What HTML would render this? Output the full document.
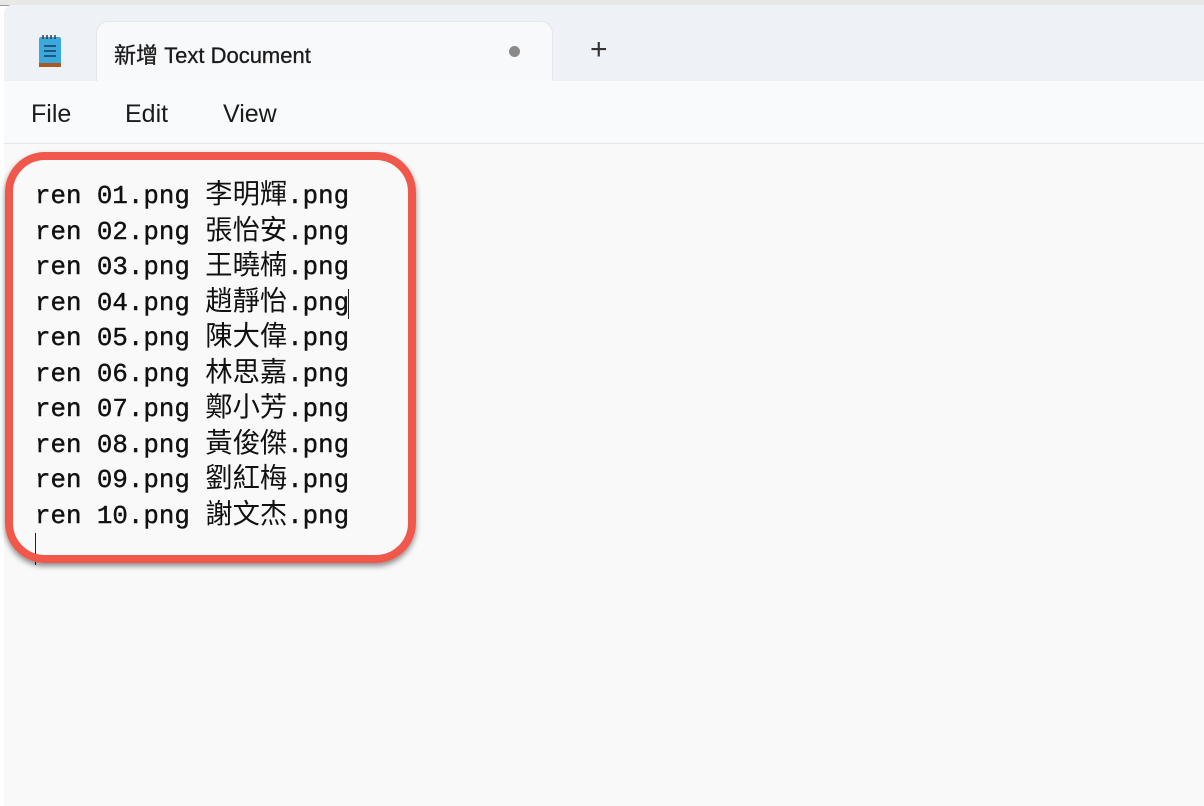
<!DOCTYPE html>
<html><head><meta charset="utf-8"><style>
*{margin:0;padding:0;box-sizing:border-box}
body{width:1204px;height:806px;overflow:hidden;background:#fff;position:relative;font-family:"Liberation Sans","Noto Sans CJK TC",sans-serif}
.top{position:absolute;left:0;top:0;width:1204px;height:6px;background:#e8e8e8;border-bottom:1px solid #999}
.win{position:absolute;left:4px;top:5px;right:0;bottom:0;background:#f9f9f9;border-top-left-radius:8px;overflow:hidden}
.tabbar{position:absolute;left:0;top:0;right:0;height:76px;background:#eef2f6}
.tab{position:absolute;left:92px;top:16px;width:457px;height:62px;background:#f8f9fb;border:1px solid #e3e6ea;border-bottom:none;border-radius:12px 12px 0 0}
.menu{position:absolute;left:0;top:76px;right:0;height:63px;background:#f9fafb;border-bottom:1px solid #e6e6e6}
.m{position:absolute;top:19px;font-size:25px;color:#1b1b1b}
.ed{position:absolute;left:35px;top:179px;font-family:"Liberation Mono","Noto Sans CJK TC",monospace;font-size:25.8px;line-height:35.5px;color:#111;white-space:pre;-webkit-text-stroke:0.4px #111}
.ed b{font-weight:normal;font-size:27.3px;font-family:"Noto Sans CJK TC",sans-serif;line-height:0;-webkit-text-stroke:0}
.box{position:absolute;left:5px;top:152px;width:411px;height:411px;border:8px solid #f0584c;border-radius:40px;box-shadow:0 3px 6px rgba(0,0,0,.45)}
</style></head><body>
<div class="top"></div>
<div class="win">
<div class="tabbar">
<svg style="position:absolute;left:34px;top:28px" width="24" height="36" viewBox="0 0 24 36"><rect x="1" y="4" width="22" height="28" rx="2" fill="#3aa9de"/><rect x="1" y="30" width="22" height="4" fill="#a85a22"/><path d="M6 13h12M6 18h12M6 23h12" stroke="#1a3c5a" stroke-width="1.6"/><path d="M5 2v4M9 2v4M13 2v4M17 2v4" stroke="#333" stroke-width="1.4"/></svg>
<div class="tab"><span style="position:absolute;left:17px;top:16px;font-size:22px;color:#1b1b1b;-webkit-text-stroke:0.3px #1b1b1b">新增 Text Document</span><span style="position:absolute;left:412px;top:24px;width:11px;height:11px;border-radius:50%;background:#8a8a8a"></span></div>
<span style="position:absolute;left:586px;top:28px;font-size:30px;font-weight:300;color:#333">+</span>
</div>
<div class="menu"><span class="m" style="left:27px">File</span><span class="m" style="left:121px">Edit</span><span class="m" style="left:219px">View</span></div>
</div>
<div class="ed">ren 01.png <b>李明輝</b>.png
ren 02.png <b>張怡安</b>.png
ren 03.png <b>王曉楠</b>.png
ren 04.png <b>趙靜怡</b>.png
ren 05.png <b>陳大偉</b>.png
ren 06.png <b>林思嘉</b>.png
ren 07.png <b>鄭小芳</b>.png
ren 08.png <b>黃俊傑</b>.png
ren 09.png <b>劉紅梅</b>.png
ren 10.png <b>謝文杰</b>.png</div>
<div style="position:absolute;left:348px;top:289px;width:1px;height:30px;background:#222"></div>
<div style="position:absolute;left:35px;top:533px;width:1px;height:32px;background:#222"></div>
<div class="box"></div>
</body></html>
